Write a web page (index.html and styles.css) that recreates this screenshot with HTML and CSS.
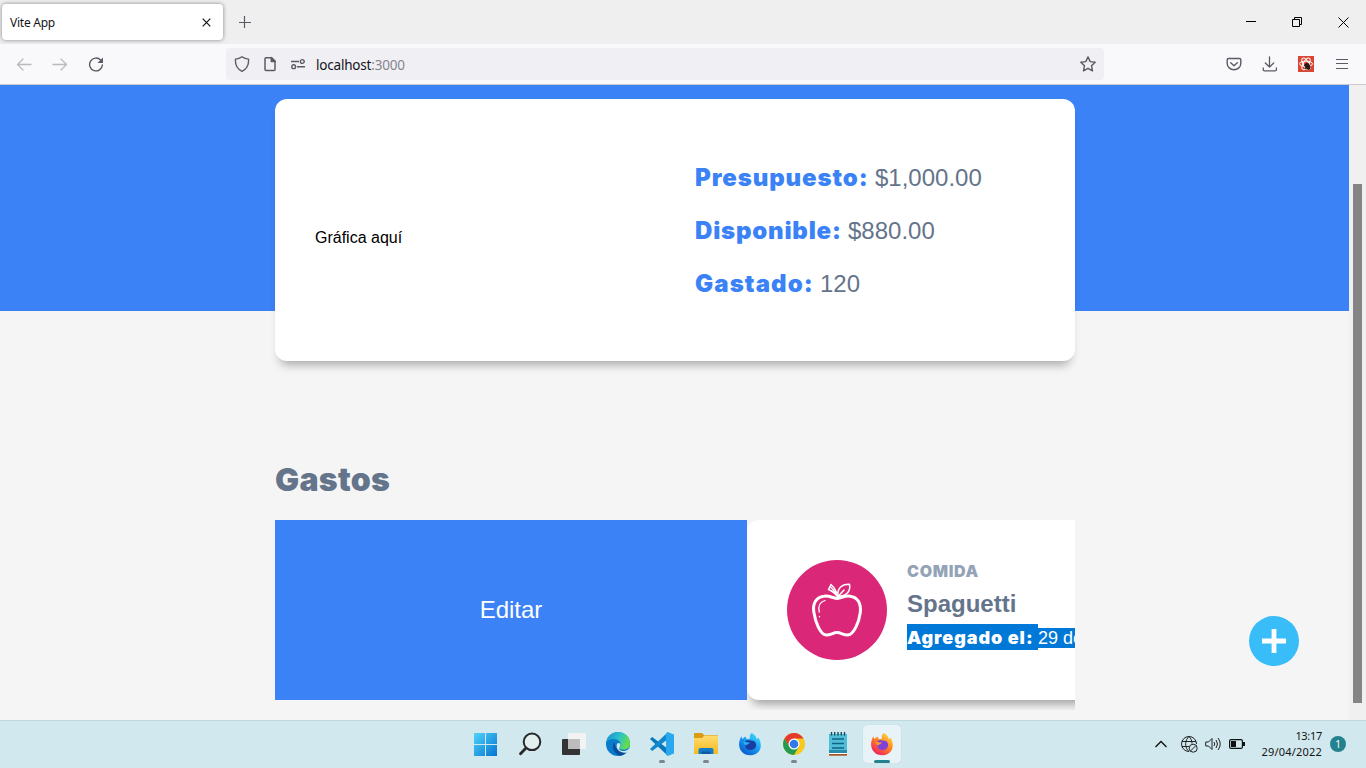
FILE: index.html
```html
<!DOCTYPE html>
<html lang="es">
<head>
<meta charset="utf-8">
<title>Vite App</title>
<link rel="stylesheet" href="styles.css">
</head>
<body>
<div class="screen">
  <header class="tabbar">
    <div class="tab"><span class="tab-title">Vite App</span>
      <svg width="9" height="9" viewBox="0 0 9 9"><path d="M.7.7l7.6 7.6M8.3.7L.7 8.3" stroke="#15141a" stroke-width="1.2"/></svg>
    </div>
    <svg class="newtab" width="12" height="12" viewBox="0 0 12 12"><path d="M5.500 0v12M0 6.500h12" stroke="#5b5b66" stroke-width="1.2"/></svg>
    <div class="window-buttons">
      <svg width="10" height="10" viewBox="0 0 10 10"><path d="M0 4.500h10" stroke="#000"/></svg>
      <svg width="10" height="10" viewBox="0 0 10 10" fill="none" stroke="#000"><path d="M.5 2.500h7v7h-7zM2.500 2.500v-2h7v7h-2"/></svg>
      <svg width="11" height="11" viewBox="0 0 11 11"><path d="M.5.5l10 10M10.500.5l-10 10" stroke="#000"/></svg>
    </div>
  </header>
  <nav class="toolbar">
    <div class="nav-buttons">
      <svg width="16" height="16" viewBox="0 0 16 16" fill="none" stroke="#b9b9be" stroke-width="1.300" stroke-linecap="round" stroke-linejoin="round"><path d="M15 8.500H1.500M7 3L1.500 8.500 7 14"/></svg>
      <svg width="16" height="16" viewBox="0 0 16 16" fill="none" stroke="#b9b9be" stroke-width="1.300" stroke-linecap="round" stroke-linejoin="round"><path d="M1 8.500h13.500M9 3L14.500 8.500 9 14"/></svg>
      <svg width="16" height="16" viewBox="0 0 16 16"><path d="M12.600 4A6.400 6.400 0 1 0 14.400 9" fill="none" stroke="#5b5b66" stroke-width="1.400" stroke-linecap="round"/><path d="M15 1.500V7H9.500z" fill="#5b5b66"/></svg>
    </div>
    <div class="urlbar">
      <svg width="16" height="16" viewBox="0 0 16 16" fill="none" stroke="#5b5b66" stroke-width="1.400" stroke-linejoin="round"><path d="M8 .8c2 1.400 4.200 2.100 6.500 2.300C15 8.500 13 13 8 15.300 3 13 1 8.500 1.500 3.100 3.800 2.900 6 2.200 8 .8z"/></svg>
      <svg width="14" height="16" viewBox="0 0 14 16" fill="none" stroke="#5b5b66" stroke-width="1.500" stroke-linejoin="round"><path d="M3 1.700h5.500L12 5.200v8.300q0 1-1 1H3q-1 0-1-1V2.700q0-1 1-1z"/><path d="M8.300 1.500v4h4z" fill="#5b5b66"/></svg>
      <svg class="perm" width="16" height="12" viewBox="0 0 16 12" fill="none" stroke="#5b5b66" stroke-width="1.400"><path d="M1 3.500h8M7 8.700h8"/><circle cx="12.300" cy="3.500" r="1.900"/><circle cx="3.700" cy="8.700" r="1.900"/></svg>
      <span class="url">localhost<span class="port">:3000</span></span>
      <svg width="16" height="16" viewBox="0 0 16 16" fill="none" stroke="#5b5b66" stroke-width="1.400" stroke-linejoin="round"><path d="M8 .9l2.200 4.700 5 .6-3.700 3.500 1 5.100L8 12.300l-4.500 2.500 1-5.100L.8 6.200l5-.6z"/></svg>
    </div>
    <div class="actions">
      <svg width="16" height="16" viewBox="0 0 16 16" fill="none" stroke="#5b5b66" stroke-width="1.400" stroke-linecap="round" stroke-linejoin="round"><path d="M2.500 2.500h11q1.300 0 1.300 1.300V7.500a6.800 6.200 0 0 1-13.600 0V3.800q0-1.300 1.300-1.300zM4.700 6.700L8 9.700l3.300-3"/></svg>
      <svg width="16" height="16" viewBox="0 0 16 16" fill="none" stroke="#5b5b66" stroke-width="1.300" stroke-linecap="round" stroke-linejoin="round"><path d="M7.500.8v10M3.300 7l4.200 4 4.200-4M1.200 12v1.500q0 1.300 1.300 1.300h10.600q1.300 0 1.300-1.300V12"/></svg>
      <svg width="16" height="16" viewBox="0 0 16 16" fill="none"><path fill="#d94633" d="M0 0h16v16H0z"/><g stroke="#fff"><ellipse cx="8" cy="7.800" rx="6.500" ry="2.700"/><ellipse cx="8" cy="7.800" rx="6.500" ry="2.700" transform="rotate(60 8 7.800)"/><ellipse cx="8" cy="7.800" rx="6.500" ry="2.700" transform="rotate(120 8 7.800)"/></g><ellipse cx="9.500" cy="10.300" rx="2.500" ry="3.500" transform="rotate(-35 9.500 10.300)" fill="#2b1714"/><path d="M6 9l6 3M7 13l4-5M10 7l1 7" stroke="#2b1714"/></svg>
      <svg width="12" height="12" viewBox="0 0 12 12"><path d="M0 1.500h12M0 5.500h12M0 10.500h12" stroke="#5b5b66" stroke-width="1.200"/></svg>
    </div>
  </nav>
  <div class="viewport">
    <main class="page">
      <div class="hero">
        <section class="budget">
          <p class="chart">Gráfica aquí</p>
          <div class="figures">
            <p><b class="w1">Presupuesto:</b>$1,000.00</p>
            <p><b class="w2">Disponible:</b>$880.00</p>
            <p><b class="w3">Gastado:</b>120</p>
          </div>
        </section>
      </div>
      <section class="expenses">
        <h2>Gastos</h2>
        <div class="swipe">
          <div class="edit">Editar</div>
          <article class="expense">
            <svg class="category-icon" width="100" height="100" viewBox="0 0 100 100" fill="none" stroke="#fff" stroke-linecap="round" stroke-linejoin="round"><circle cx="50" cy="50" r="50" fill="#db2777" stroke="none"/><path stroke-width="3" d="M50 38.500C45 38 43 35.500 37 36.200C28 37 25.500 45 27 53C28.500 62 33 74.500 39 75C43 75.500 46 72.500 50 72.500S57 75.500 61 75C67 74.500 72 62 73.200 53C74.500 44 71 37 63 36.200C57 35.500 55 38 50 38.500Z"/><path stroke-width="1.500" d="M51 38C49.500 34 46 31.500 41.500 29.500L44 24.500C48 28 50 32 51 38ZM43.500 27C47 30 49 33 51 38M51 36C50 29 54 24 62.500 24.200C64 32 59 36 51 36.500L57 30"/><path stroke-width="1.300" d="M38 40.500C31.500 42.500 31 47 32.300 52M32.500 56.500v.3"/></svg>
            <div class="details">
              <p class="category">Comida</p>
              <p class="name">Spaguetti</p>
              <p class="date"><b>Agregado el:</b><span>29 de</span></p>
            </div>
          </article>
        </div>
      </section>
      <button class="add" aria-label="Nuevo gasto"><svg width="24" height="24" viewBox="0 0 24 24"><path d="M12 0v24M0 12h24" stroke="#fff" stroke-width="4.800"/></svg></button>
    </main>
    <aside class="scrollbar"><div class="thumb"></div></aside>
  </div>
  <footer class="taskbar">
    <svg width="0" height="0" class="defs"><defs>
      <linearGradient id="win" x2="1" y2="1"><stop stop-color="#4fd4fb"/><stop offset="1" stop-color="#0573d0"/></linearGradient>
      <linearGradient id="edge" x2="1" y2=".3"><stop stop-color="#168cd5"/><stop offset=".6" stop-color="#2cc4c8"/><stop offset="1" stop-color="#65dc4b"/></linearGradient>
      <linearGradient id="fold" x2="0" y2="1"><stop stop-color="#ffdc70"/><stop offset="1" stop-color="#f5b91e"/></linearGradient>
      <linearGradient id="blue" x1=".9" x2=".2" y2="1"><stop stop-color="#48e5fa"/><stop offset=".5" stop-color="#189bf1"/><stop offset="1" stop-color="#0755c9"/></linearGradient>
      <linearGradient id="fire" x1=".9" x2=".2" y2="1"><stop stop-color="#ffe34c"/><stop offset=".45" stop-color="#ff8a25"/><stop offset="1" stop-color="#ed1865"/></linearGradient>
      <path id="fox" d="M13.500 1C17 2.500 18.500 5 18.700 7.200L20.300 5.500C25 12 23.500 23 12.500 23.200C4 23.200-.5 16 1.600 8.500L3.200 4.200 4.500 7 7.200 4.500 9 7.200 12 6.500C11.500 4 12 2.500 13.500 1Z"/>
    </defs></svg>
    <div class="apps">
      <div class="app"><svg width="24" height="24" viewBox="0 0 24 24" fill="url(#win)"><path d="M0 1h23v23H0z"/><path d="M11.500 0v24M0 12.500h24" stroke="#d0e8ee"/></svg></div>
      <div class="app"><svg width="24" height="24" viewBox="0 0 24 24"><circle cx="14" cy="9.800" r="8.300" fill="#e2eff1" stroke="#292929" stroke-width="2"/><path d="M8 16l-5.500 5.800" stroke="#292929" stroke-width="2.800" stroke-linecap="round"/></svg></div>
      <div class="app"><svg width="24" height="24" viewBox="0 0 24 24"><rect y="7" width="18" height="16" rx="1" fill="#343434"/><rect x="6" y="1" width="18" height="16" rx="1" fill="#f3f3f3"/><path d="M6 7h12v10H6z" fill="#bcbcbc"/></svg></div>
      <div class="app"><svg width="24" height="24" viewBox="0 0 24 24"><circle cx="12" cy="12" r="12" fill="#087cca"/><path d="M.1 11C1.500 4.500 6 0 12 0c7 0 12 5 12 11.500 0 4-3 6.200-6.300 6.200-2.800 0-4.700-1-3.700-2.700C16.500 11 12.500 7 8 7 3.500 7 1 9 .1 11z" fill="url(#edge)"/><path d="M8.500 10C5 14 7.500 22 14 23.800 18 23 21 21 22.200 18.500 15 22 8.500 17.500 8.500 10z" fill="#0b4c99"/><path d="M13.900 15C12 18 15 19.200 18 19c2-.1 4-1 5-2.800l.3 1.600-2 2.700C15 22 9 17 11 12c1-1.500 3-1 3.400.5z" fill="#d0e8ee"/></svg></div>
      <div class="app"><svg width="24" height="24" viewBox="0 0 24 24"><path d="M2.200 5L0 7l16.500 15.500L18 17z" fill="#0878bd"/><path d="M2.200 19L0 17 16.500 1.500 18 7z" fill="#1187cd"/><path d="M17.500 0L24 2.500v19L17.500 24l-1.500-1.500V1.500z" fill="#27a8ef"/></svg><i class="dot"></i></div>
      <div class="app"><svg width="24" height="24" viewBox="0 0 24 24"><path d="M0 2q0-1 1-1h7l2 2h13q1 0 1 1v8H0z" fill="#d99b12"/><path d="M0 6h8l2.500-2.500H23q1 0 1 1V22H0z" fill="url(#fold)"/><path d="M4.500 22v-4q0-2 2-2h11q2 0 2 2v4z" fill="#147dc7"/><path d="M7.500 19.500h9V22h-9z" fill="#0a5b9f"/></svg><i class="dot"></i></div>
      <div class="app"><svg width="24" height="24" viewBox="0 0 24 24"><use href="#fox" fill="url(#blue)"/><path d="M7 10c2-3 5-1 9-1 4 3 2 9-3.500 9-4 0-6-3-5.500-8z" fill="#193da0"/><path d="M5 10c3-1 4 1 7 .5-1 2-3 1.500-4.500 3" fill="#23b6f7"/></svg></div>
      <div class="app"><svg width="24" height="24" viewBox="0 0 24 24"><circle cx="12" cy="12" r="11" fill="#f9c91d"/><path d="M2.500 6.500A11 11 0 0 1 21.500 6.500H12L7.200 15z" fill="#e33b2e"/><path d="M2.500 6.500A11 11 0 0 0 12 23l4.800-8.300H7.200z" fill="#229b50"/><circle cx="12" cy="12" r="5.500" fill="#fff"/><circle cx="12" cy="12" r="4.300" fill="#3279e9"/></svg><i class="dot"></i></div>
      <div class="app"><svg width="24" height="24" viewBox="0 0 24 24"><path d="M3 2h18v19H3z" fill="#4fbfd9"/><path d="M3 18h18v3H3z" fill="#288ca9"/><path d="M3 22h18v1.700H3z" fill="#a65420"/><path d="M3 21h18v1H3z" fill="#fff"/><path d="M6 7h12M6 11.500h12M6 16h12" stroke="#146487" stroke-width="1.500"/><path d="M5.500 0v3.500M8.700 0v3.500M12 0v3.500M15.300 0v3.500M18.500 0v3.500" stroke="#174c61" stroke-width="1.400"/></svg></div>
      <div class="app"><div class="active"><svg width="24" height="24" viewBox="0 0 24 24"><use href="#fox" fill="url(#fire)"/><path d="M7 10c2-3 5-1 9-1 4 3 2 9-3.500 9-4 0-6-3-5.500-8z" fill="#8140d7"/><path d="M5 10c3-1 4 1 7 .5-1 2-3 1.500-4.500 3" fill="#ff9b23"/></svg></div><i class="dot wide"></i></div>
    </div>
    <div class="tray">
      <svg width="12" height="8" viewBox="0 0 12 8"><path d="M.5 7L6 1.500 11.500 7" fill="none" stroke="#111" stroke-width="1.300"/></svg>
      <svg width="17" height="17" viewBox="0 0 17 17" fill="none" stroke="#222" stroke-width="1"><path d="M8 15.500A7.500 7.500 0 1 1 15.500 8M8 15.500C3 11 4 4 8 .5c2 2 3 4.500 3 7M1 5.500h14M1 10.500h7"/><circle cx="12.200" cy="12.200" r="4"/><path d="M9.500 15l5.500-5.500"/></svg>
      <svg width="17" height="14" viewBox="0 0 17 14" fill="none" stroke="#222"><path d="M.7 5h2.800L7 1.500v11L3.500 9H.7zM9 5q1.500 2 0 4M11 3q3 4 0 8M13 1q4.500 6 0 12"/></svg>
      <svg width="16" height="10" viewBox="0 0 16 10"><rect x=".6" y=".6" width="12.800" height="8.800" rx="1.500" fill="none" stroke="#111" stroke-width="1.200"/><path d="M2 2h5v6H2zM14 3h2v4h-2z" fill="#111"/></svg>
      <div class="clock"><span>13:17</span><span>29/04/2022</span></div>
      <span class="badge">1</span>
    </div>
  </footer>
</div>
</body>
</html>
```
FILE: styles.css
```css
* { box-sizing: border-box; }
body, p, h2 { margin: 0; }
svg { display: block; flex: none; }
.screen { width: 1366px; height: 768px; display: grid; grid-template-rows: 44px 41px 635px 48px; overflow: hidden; font-family: "Liberation Sans", Arial, sans-serif; }
.tabbar { display: flex; align-items: center; background: #efefef; padding-left: 2px; font: 12px "Noto Sans", sans-serif; color: #15141a; }
.tab { width: 221px; height: 36px; display: flex; align-items: center; justify-content: space-between; background: #fff; border-radius: 4px; box-shadow: 0 0 4px rgba(0,0,0,.45); padding: 0 12px 0 8px; }
.tab-title { letter-spacing: -.25px; }
.newtab { margin-left: 16px; }
.window-buttons { display: flex; gap: 36px; align-items: center; margin-left: auto; padding-right: 17px; }
.toolbar { display: flex; align-items: flex-start; background: #f9f9fb; border-bottom: 1px solid #cccccf; }
.nav-buttons { width: 226px; height: 40px; padding-left: 16px; display: flex; align-items: center; gap: 20px; }
.urlbar { width: 878px; height: 32px; margin-top: 4px; background: #f0f0f4; border-radius: 4px; padding: 0 8px; display: flex; align-items: center; }
.urlbar svg:nth-child(2) { margin-left: 13px; }
.perm { margin: 0 10px 0 13px; }
.url { flex: 1; font: 13.500px "Noto Sans", sans-serif; letter-spacing: -.2px; color: #15141a; padding-top: 2px; }
.port { color: #86868e; }
.actions { flex: 1; height: 40px; display: flex; align-items: center; gap: 20px; padding-left: 122px; }
.actions svg:last-child { margin-left: 2px; }
.viewport { display: flex; background: #f5f5f5; overflow: hidden; }
.page { width: 1349px; position: relative; overflow: hidden; }
.hero { height: 226px; background: #3b82f6; padding: 14px 0 0 275px; }
.budget { width: 800px; height: 262px; background: #fff; border-radius: 12px; box-shadow: 0 9px 10px -5px rgba(0,0,0,.3); padding: 40px; display: grid; grid-template-columns: 340px 340px; gap: 40px; align-items: center; }
.chart { font-size: 16px; padding-top: 16px; }
.figures p { height: 53px; line-height: 53px; font-size: 24px; color: #64748b; white-space: nowrap; display: flex; }
.figures b { font: 900 24px/53px Inter, sans-serif; color: #3b82f6; flex: none; }
.w1 { width: 180px; letter-spacing: .9px; }
.w2 { width: 153px; letter-spacing: .8px; }
.w3 { width: 125px; letter-spacing: 1.100px; }
.expenses { width: 800px; margin: 146px 0 0 275px; }
h2 { font: 900 32px/45px Inter, sans-serif; letter-spacing: .3px; color: #64748b; height: 63px; }
.swipe { display: flex; height: 190px; align-items: flex-start; overflow: hidden; }
.edit { width: 472px; height: 180px; flex: none; position: relative; z-index: 1; background: #3b82f6; color: #fff; font-size: 24px; display: grid; place-items: center; }
.expense { width: 800px; height: 180px; flex: none; background: #fff; border-radius: 12px; box-shadow: 0 9px 10px -5px rgba(0,0,0,.35); padding: 40px; display: flex; gap: 20px; }
.category { font: 900 16px/22px Inter, sans-serif; letter-spacing: .7px; text-transform: uppercase; color: #94a3b8; }
.name { font-size: 24px; font-weight: bold; line-height: 28px; color: #64748b; margin: 8px 0 6px; }
.date { display: flex; align-items: center; white-space: nowrap; color: #fff; font-size: 18px; }
.date b { font: 900 18px/27px Inter, sans-serif; letter-spacing: .95px; background: #0078d7; width: 131px; height: 26px; }
.date span { background: #0078d7; line-height: 20px; height: 20px; margin-top: 2px; }
.add { position: absolute; left: 1249px; top: 531px; width: 50px; height: 50px; border: 0; border-radius: 50%; padding: 0; display: grid; place-items: center; background: #38bdf8; }
.scrollbar { width: 17px; background: #f0f0f0; padding: 99px 4px 17px; }
.thumb { height: 519px; background: #858585; }
.taskbar { background: #d0e8ee; box-shadow: inset 0 1px #bfd8de; display: flex; padding-left: 464px; }
.defs { width: 0; }
.apps { display: flex; width: 440px; }
.app { width: 44px; height: 48px; display: grid; place-items: center; position: relative; }
.active { width: 38px; height: 38px; border-radius: 4px; background: #e7f3f7; display: grid; place-items: center; box-shadow: 0 0 1px #a8bfc5; }
.dot { position: absolute; bottom: 5px; left: 19px; width: 6px; height: 3px; border-radius: 2px; background: #7b8689; }
.wide { left: 14px; width: 16px; background: #24818e; }
.tray { margin-left: 251px; display: flex; align-items: center; width: 192px; height: 48px; }
.tray > svg:nth-child(2) { margin-left: 14px; }
.tray > svg:nth-child(3) { margin-left: 7px; }
.tray > svg:nth-child(4) { margin-left: 7px; }
.clock { width: 77px; display: flex; flex-direction: column; align-items: flex-end; font: 11px/16px "Noto Sans", sans-serif; color: #151515; letter-spacing: .2px; }
.clock span:first-child { letter-spacing: -.3px; }
.badge { flex: none; width: 16px; height: 16px; margin-left: 8px; border-radius: 50%; background: #24818e; color: #fff; font: 10px/16px "Noto Sans", sans-serif; text-align: center; }
```
